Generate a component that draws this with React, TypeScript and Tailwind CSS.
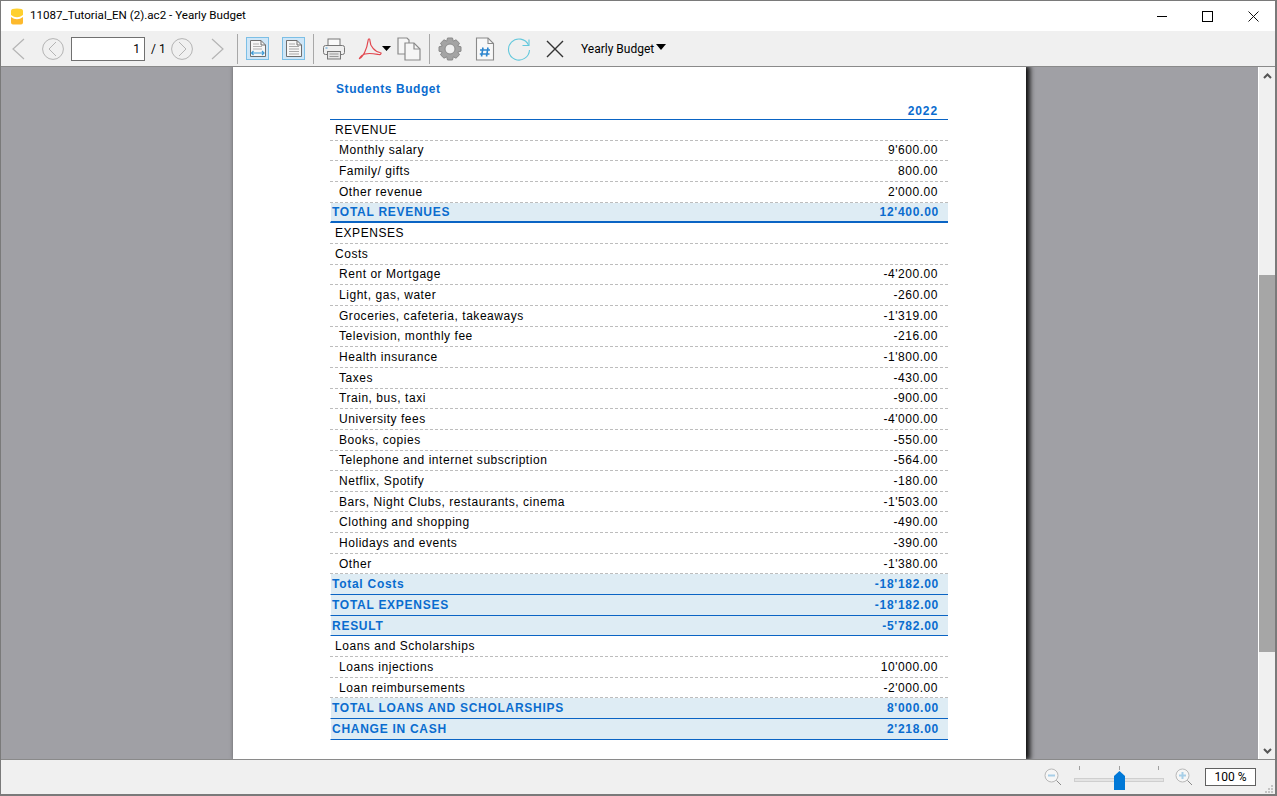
const rows: [string, string, string][] = [
  ['h', 'REVENUE', ''],
  ['i', 'Monthly salary', "9'600.00"],
  ['i', 'Family/ gifts', '800.00'],
  ['i', 'Other revenue', "2'000.00"],
  ['T', 'TOTAL REVENUES', "12'400.00"],
  ['h', 'EXPENSES', ''],
  ['h', 'Costs', ''],
  ['i', 'Rent or Mortgage', "-4'200.00"],
  ['i', 'Light, gas, water', '-260.00'],
  ['i', 'Groceries, cafeteria, takeaways', "-1'319.00"],
  ['i', 'Television, monthly fee', '-216.00'],
  ['i', 'Health insurance', "-1'800.00"],
  ['i', 'Taxes', '-430.00'],
  ['i', 'Train, bus, taxi', '-900.00'],
  ['i', 'University fees', "-4'000.00"],
  ['i', 'Books, copies', '-550.00'],
  ['i', 'Telephone and internet subscription', '-564.00'],
  ['i', 'Netflix, Spotify', '-180.00'],
  ['i', 'Bars, Night Clubs, restaurants, cinema', "-1'503.00"],
  ['i', 'Clothing and shopping', '-490.00'],
  ['i', 'Holidays and events', '-390.00'],
  ['i', 'Other', "-1'380.00"],
  ['t', 'Total Costs', "-18'182.00"],
  ['t', 'TOTAL EXPENSES', "-18'182.00"],
  ['t', 'RESULT', "-5'782.00"],
  ['h', 'Loans and Scholarships', ''],
  ['i', 'Loans injections', "10'000.00"],
  ['i', 'Loan reimbursements', "-2'000.00"],
  ['t', 'TOTAL LOANS AND SCHOLARSHIPS', "8'000.00"],
  ['t', 'CHANGE IN CASH', "2'218.00"],
]

function Row({ kind, label, value }: { kind: string; label: string; value: string }) {
  if (kind === 't' || kind === 'T') {
    return (
      <div className={`h-[20.66px] flex items-center justify-between bg-[#deecf4] border-l border-l-white pl-[1px] pr-[9px] font-bold text-[#0a6ccf] tracking-[0.73px] border-b-[#0a64c4] ${kind === 'T' ? 'border-b-2' : 'border-b'}`}>
        <span>{label}</span>
        <span>{value}</span>
      </div>
    )
  }
  return (
    <div className={`h-[20.66px] flex items-center justify-between pr-[10px] border-b border-dashed border-b-[#bdbdbd] text-black tracking-[0.54px] ${kind === 'i' ? 'pl-[9px]' : 'pl-[5px]'}`}>
      <span>{label}</span>
      <span>{value}</span>
    </div>
  )
}

function Sep() {
  return <div className="w-px h-[30px] bg-[#a8a8a8]" />
}

function Chevron({ dir }: { dir: 'l' | 'r' }) {
  return (
    <svg width="13" height="22" viewBox="0 0 13 22" fill="none" stroke="#b4b4b4" strokeWidth="1.2">
      <path d={dir === 'l' ? 'M12 1 L1 11 L12 21' : 'M1 1 L12 11 L1 21'} />
    </svg>
  )
}

function CircleChevron({ dir }: { dir: 'l' | 'r' }) {
  return (
    <svg width="22" height="22" viewBox="0 0 22 22" fill="none" stroke="#b4b4b4" strokeWidth="1">
      <circle cx="11" cy="11" r="10.4" />
      <path d={dir === 'l' ? 'M14 4 L7 11 L14 18' : 'M8 4 L15 11 L8 18'} />
    </svg>
  )
}

function DocIcon({ wide }: { wide?: boolean }) {
  return (
    <div className="w-[23px] h-[23px] border border-[#7cbfe6] bg-[#cfe6f7] flex items-center justify-center">
      <svg width="19" height="19" viewBox="0 0 19 19" fill="none">
        <path d="M2.5 1.5 H13 L17.5 6 V17.5 H2.5 Z" fill="#f6f6f6" stroke="#6e6e6e" />
        <path d="M13 1.5 V6 H17.5" stroke="#6e6e6e" />
        {wide ? (
          <>
            <path d="M5 5h6M5 7.5h9M5 10h9" stroke="#b0b0b0" />
            <path d="M3.5 14 H16 M5.5 12 L3.5 14 L5.5 16 M14 12 L16 14 L14 16" stroke="#3d9ad6" strokeWidth="1.2" />
          </>
        ) : (
          <path d="M5 5h6M5 7.5h10M5 10h10M5 12.5h10M5 15h10" stroke="#a8a8a8" />
        )}
      </svg>
    </div>
  )
}

export default function App() {
  return (
    <div className="w-[1277px] h-[796px] overflow-hidden flex flex-col bg-[#f0f0f0] border-t border-l border-r-2 border-b-2 border-[#7a7a7a] font-['Liberation_Sans',sans-serif]">
      {/* title bar */}
      <div className="h-[30px] shrink-0 bg-white flex items-center pl-[9px] text-[11.6px] text-black font-['Roboto',sans-serif]">
        <svg width="14" height="17" viewBox="0 0 14 17" className="mr-[6px]">
          <path d="M1 2.5 Q1 0.5 7 0.5 Q13 0.5 13 2.5 V7 Q10 9.3 7 9.3 Q4 9.3 1 7 Z" fill="#ffd02e" />
          <path d="M1 9 Q4 11.2 7 11.2 Q10 11.2 13 9 V14.5 Q13 16.5 11 16.5 H3 Q1 16.5 1 14.5 Z" fill="#fdb92c" />
        </svg>
        <span>11087_Tutorial_EN (2).ac2 - Yearly Budget</span>
        <div className="ml-auto flex items-center h-full">
          <div className="w-[44px] flex justify-center">
            <div className="w-[10px] h-px bg-black" />
          </div>
          <div className="w-[47px] flex justify-center">
            <div className="w-[11px] h-[11px] border border-black" />
          </div>
          <div className="w-[44px] flex justify-center">
            <svg width="11" height="11" viewBox="0 0 11 11" stroke="#111" strokeWidth="1">
              <path d="M0.5 0.5 L10.5 10.5 M10.5 0.5 L0.5 10.5" />
            </svg>
          </div>
        </div>
      </div>

      {/* toolbar */}
      <div className="h-[35px] shrink-0 bg-[#f0f0f0] flex items-center">
        <div className="ml-[11px]"><Chevron dir="l" /></div>
        <div className="ml-[17px]"><CircleChevron dir="l" /></div>
        <div className="ml-[7px] w-[74px] h-[24px] bg-white border border-[#707070] flex items-center justify-end pr-[4px] text-[12px] font-['Roboto',sans-serif]">1</div>
        <div className="ml-[6px] w-[20px] text-[12px] font-['Roboto',sans-serif]">/ 1</div>
        <CircleChevron dir="r" />
        <div className="ml-[18px]"><Chevron dir="r" /></div>
        <div className="ml-[13px]"><Sep /></div>
        <div className="ml-[8px]"><DocIcon wide /></div>
        <div className="ml-[13px]"><DocIcon /></div>
        <div className="ml-[8px]"><Sep /></div>
        <svg className="ml-[8px]" width="24" height="24" viewBox="0 0 24 24" fill="none" stroke="#777">
          <rect x="6" y="2" width="12" height="7" fill="#fafafa" />
          <rect x="1.5" y="8.5" width="21" height="9" rx="2" fill="#efefef" />
          <rect x="5.5" y="14.5" width="13" height="7.5" fill="#e4e4e4" />
          <path d="M7.5 17h9M7.5 19.5h9" stroke="#999" />
          <path d="M3.5 11h2" stroke="#4a9ed8" />
        </svg>
        <svg className="ml-[12px]" width="24" height="24" viewBox="0 0 24 24" fill="none" stroke="#e2454d" strokeWidth="1.2">
          <path d="M1.5 21.5 C5 20 9 12 10 4 C10.2 1 12 1 12 4 C12 9 17 15 22 15.5 C24 15.5 23 18 20.5 17.5 C15 16.5 8 15 4 18.5 C2 20.5 1 22 1.5 21.5 Z" />
        </svg>
        <svg width="9" height="5" viewBox="0 0 9 5"><path d="M0 0 H9 L4.5 5 Z" fill="#000" /></svg>
        <svg className="ml-[6px]" width="24" height="24" viewBox="0 0 24 24" fill="#f6f6f6" stroke="#8a8a8a" strokeWidth="1.2">
          <path d="M1 1 H10 L12 3 V17 H1 Z" />
          <path d="M8 6 H17 L23 12 V23 H8 Z" />
          <path d="M17 6 V12 H23" fill="none" />
        </svg>
        <div className="ml-[8px]"><Sep /></div>
        <svg className="ml-[8px]" width="24" height="24" viewBox="0 0 24 24" fill="#a4a4a4" stroke="#8a8a8a">
          <path fillRule="evenodd" d="M9.5 1 H14.5 L15.3 4.2 L18 2.8 L21.5 6.2 L19.8 9 L23 9.8 V14.2 L19.8 15 L21.5 17.8 L18 21.2 L15.3 19.8 L14.5 23 H9.5 L8.7 19.8 L6 21.2 L2.5 17.8 L4.2 15 L1 14.2 V9.8 L4.2 9 L2.5 6.2 L6 2.8 L8.7 4.2 Z M12 7 A5 5 0 1 0 12 17 A5 5 0 1 0 12 7 Z" />
        </svg>
        <svg className="ml-[13px]" width="20" height="24" viewBox="0 0 20 24" fill="#f8f8f8" stroke="#8a8a8a" strokeWidth="1.1">
          <path d="M1.5 1 H13 L18.5 6.5 V23 H1.5 Z" />
          <path d="M13 1 V6.5 H18.5" fill="none" />
          <path d="M8 10.5 L6.5 19.5 M13 10.5 L11.5 19.5 M5 13 H15 M4.8 17 H14.5" stroke="#2d86cf" strokeWidth="1.6" fill="none" />
        </svg>
        <svg className="ml-[12px]" width="24" height="24" viewBox="0 0 24 24" fill="none" stroke="#64c8dc" strokeWidth="1.1">
          <path d="M21.5 8 A10.5 10.5 0 1 0 22.5 13" />
          <path d="M15.5 8.5 H22 V2.5" />
        </svg>
        <svg className="ml-[15px]" width="18" height="18" viewBox="0 0 18 18" stroke="#333" strokeWidth="1.4">
          <path d="M1 1 L17 17 M17 1 L1 17" />
        </svg>
        <span className="ml-[17px] text-[12px] font-['Roboto',sans-serif]">Yearly Budget</span>
        <svg className="ml-[2px] -mt-[3px]" width="10" height="6" viewBox="0 0 10 6"><path d="M0 0 H10 L5 6 Z" fill="#000" /></svg>
      </div>

      {/* report area */}
      <div className="flex-1 min-h-0 flex border-t border-b border-[#8a8a8a] bg-[#a0a0a5]">
        <div className="flex-1 min-w-0 overflow-hidden pl-[232px]">
          <div className="w-[793px] h-full bg-white shadow-[3px_0_5px_1px_#111] pl-[97px] text-[12px]">
            <div className="h-[53px] w-[618px] flex flex-col border-b border-[#0a64c4] font-bold text-[#0a6ccf]">
              <div className="pl-[6px] pt-[14.5px] leading-[15px] tracking-[0.58px]">Students Budget</div>
              <div className="text-right pr-[10px] mt-[7px] leading-[15px] tracking-[0.9px]">2022</div>
            </div>
            <div className="w-[618px]">
              {rows.map((r) => (
                <Row key={r[1]} kind={r[0]} label={r[1]} value={r[2]} />
              ))}
            </div>
          </div>
        </div>
        {/* scrollbar */}
        <div className="w-[17px] shrink-0 bg-[#f0f0f0] border-l border-l-white flex flex-col">
          <div className="h-[17px] flex items-center justify-center">
            <svg width="9" height="6" viewBox="0 0 9 6" fill="none" stroke="#555" strokeWidth="2"><path d="M1 5 L4.5 1.5 L8 5" /></svg>
          </div>
          <div className="h-[191px]" />
          <div className="w-full h-[377px] bg-[#a6a6a6]" />
          <div className="flex-1" />
          <div className="h-[17px] flex items-center justify-center">
            <svg width="9" height="6" viewBox="0 0 9 6" fill="none" stroke="#555" strokeWidth="2"><path d="M1 1 L4.5 4.5 L8 1" /></svg>
          </div>
        </div>
      </div>

      {/* status bar */}
      <div className="relative h-[34px] shrink-0 bg-[#f0f0f0] flex items-center justify-end">
        <svg width="18" height="18" viewBox="0 0 18 18" fill="#f6f6f6" stroke="#b8b8b8">
          <circle cx="7.5" cy="7.5" r="6.5" />
          <path d="M4 7.5 H11" stroke="#a8cfe8" strokeWidth="2" />
          <path d="M12.5 12.5 L17 17" stroke="#8a8a8a" />
        </svg>
        <div className="ml-[12px] relative w-[90px] h-[24px]">
          <div className="absolute left-0 top-[13px] w-[90px] h-[4px] bg-[#e4e4e4] border border-[#cfcfcf]" />
          <div className="absolute left-[5px] top-[1px] w-px h-[4px] bg-[#a0a0a0]" />
          <div className="absolute left-[45px] top-[1px] w-px h-[4px] bg-[#a0a0a0]" />
          <div className="absolute left-[84px] top-[1px] w-px h-[4px] bg-[#a0a0a0]" />
          <svg className="absolute left-[40px] top-[6px]" width="11" height="19" viewBox="0 0 11 19"><path d="M0 5 L5.5 0 L11 5 V19 H0 Z" fill="#0078d7" /></svg>
        </div>
        <svg className="ml-[11px]" width="18" height="18" viewBox="0 0 18 18" fill="#f6f6f6" stroke="#b8b8b8">
          <circle cx="7.5" cy="7.5" r="6.5" />
          <path d="M4 7.5 H11 M7.5 4 V11" stroke="#a8cfe8" strokeWidth="2" />
          <path d="M12.5 12.5 L17 17" stroke="#8a8a8a" />
        </svg>
        <div className="ml-[12px] mr-[19px] w-[51px] h-[18px] bg-white border border-[#606060] flex items-center justify-center text-[12px] font-['Roboto',sans-serif]">100 %</div>
        <svg className="absolute right-[2px] bottom-[1px]" width="8" height="8" viewBox="0 0 8 8" fill="#c4c4c4">
          <rect x="6" y="0" width="2" height="2" />
          <rect x="3" y="3" width="2" height="2" />
          <rect x="6" y="3" width="2" height="2" />
          <rect x="0" y="6" width="2" height="2" />
          <rect x="3" y="6" width="2" height="2" />
          <rect x="6" y="6" width="2" height="2" />
        </svg>
      </div>
    </div>
  )
}
